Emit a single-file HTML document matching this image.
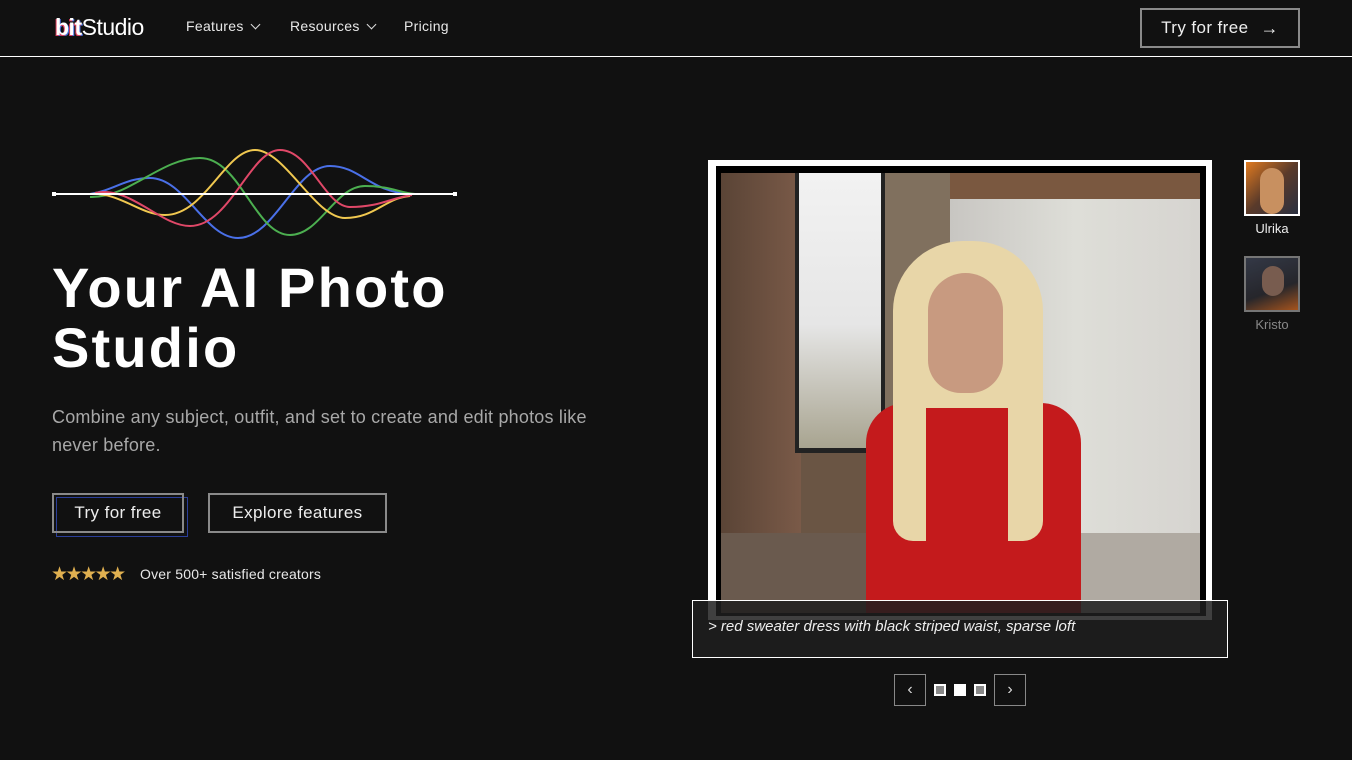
<!DOCTYPE html>
<html><head><meta charset="utf-8"><style>
*{margin:0;padding:0;box-sizing:border-box}
body{width:1352px;height:760px;background:#111111;font-family:"Liberation Sans",sans-serif;color:#fff;position:relative;overflow:hidden}
.a{position:absolute}
.nav{position:absolute;top:0;left:0;width:1352px;height:57px;border-bottom:1.5px solid #fff}
.logo{left:55px;top:14px;font-size:23px;letter-spacing:-0.5px}
.nl{top:18px;font-size:14px;color:#e8e8e8;letter-spacing:0.3px}
.chev{display:inline-block;width:7px;height:7px;border-right:1.5px solid #ddd;border-bottom:1.5px solid #ddd;transform:rotate(45deg);margin-left:8px;position:relative;top:-3px}
.btn{border:2px solid #8a8a8a;font-size:17px;color:#eee;display:flex;align-items:center;justify-content:center;letter-spacing:0.4px}
h1{position:absolute;left:52px;top:258px;font-size:56px;line-height:60px;font-weight:bold;letter-spacing:2.2px}
.sub{left:52px;top:403px;width:580px;font-size:18px;line-height:28px;color:#a8a8a8;letter-spacing:0.2px}
</style></head><body>
<div class="nav">
<div class="a logo"><b style="color:#fff;text-shadow:-1px 1px 0 #e04060,1px 1px 0 #4a70e0">bit</b>Studio</div>
<div class="a nl" style="left:186px">Features<span class="chev"></span></div>
<div class="a nl" style="left:290px">Resources<span class="chev"></span></div>
<div class="a nl" style="left:404px">Pricing</div>
<div class="a btn" style="left:1140px;top:8px;width:160px;height:40px">Try for free <span style="margin-left:12px;font-size:18px">→</span></div>
</div>

<svg class="a" style="left:0;top:140px" width="470" height="110" viewBox="0 140 470 110" fill="none" stroke-width="2">
<path d="M90 194 C115 190,125 178,150 178 C185 178,205 238,238 238 C275 238,295 166,330 166 C360 166,370 192,410 194" stroke="#4a70e8"/>
<path d="M90 197 C130 198,160 158,200 158 C240 158,255 235,290 235 C320 235,335 186,365 186 C390 186,400 193,415 194" stroke="#4caf50"/>
<path d="M90 194 C120 192,140 215,165 215 C205 215,225 150,255 150 C285 150,315 218,345 218 C375 218,385 198,410 196" stroke="#f0c850"/>
<path d="M95 193 C130 185,160 226,190 226 C230 226,250 150,280 150 C310 150,325 207,350 207 C380 207,390 198,412 195" stroke="#e04868"/>
<path d="M54 194 H455" stroke="#fff" stroke-width="2"/>
<rect x="52" y="192" width="4" height="4" fill="#fff"/><rect x="453" y="192" width="4" height="4" fill="#fff"/>
</svg>

<h1>Your AI Photo<br>Studio</h1>
<div class="a sub">Combine any subject, outfit, and set to create and edit photos like never before.</div>
<div class="a" style="left:56px;top:497px;width:132px;height:40px;border:1px solid #2b3f9a"></div>
<div class="a btn" style="left:52px;top:493px;width:132px;height:40px">Try for free</div>
<div class="a btn" style="left:208px;top:493px;width:179px;height:40px">Explore features</div>
<div class="a" style="left:51px;top:563px;font-size:19px;color:#e0b050;letter-spacing:-2.5px">★★★★★</div>
<div class="a" style="left:140px;top:566px;font-size:14px;color:#e8e8e8;letter-spacing:0.2px">Over 500+ satisfied creators</div>

<div class="a" style="left:708px;top:160px;width:504px;height:460px;background:#fff"></div>
<div class="a" style="left:716px;top:166px;width:490px;height:450px;background:#000"></div>
<div class="a" style="left:721px;top:173px;width:479px;height:440px;overflow:hidden;background:#6a5544">
 <div class="a" style="left:0;top:0;width:80px;height:440px;background:linear-gradient(90deg,#5a4436,#7a5a48)"></div>
 <div class="a" style="left:160px;top:0;width:70px;height:440px;background:#80705e"></div>
 <div class="a" style="left:74px;top:0;width:90px;height:280px;background:#222"></div>
 <div class="a" style="left:78px;top:0;width:82px;height:275px;background:linear-gradient(#f2f2f2,#e6e6e6 55%,#a8a490)"></div>
 <div class="a" style="left:229px;top:0;width:250px;height:440px;background:linear-gradient(90deg,#c8c6c2,#deded8 50%,#d6d4d0)"></div>
 <div class="a" style="left:229px;top:0;width:250px;height:26px;background:#7a5840"></div>
 <div class="a" style="left:320px;top:360px;width:159px;height:80px;background:#b0aaa2"></div>
 <div class="a" style="left:0;top:360px;width:160px;height:80px;background:#6a5a4e"></div>
 <div class="a" style="left:145px;top:230px;width:215px;height:240px;background:#c41a1c;border-radius:40px 40px 0 0"></div>
 <div class="a" style="left:172px;top:68px;width:150px;height:300px;background:#e8d6a8;border-radius:70px 70px 20px 20px"></div>
 <div class="a" style="left:207px;top:100px;width:75px;height:120px;background:#c89a80;border-radius:40px 40px 35px 35px"></div>
 <div class="a" style="left:205px;top:235px;width:82px;height:180px;background:#c41a1c"></div>
</div>
<div class="a" style="left:692px;top:600px;width:536px;height:58px;border:1.5px solid #fff;background:rgba(30,30,30,0.85)"></div>
<div class="a" style="left:708px;top:618px;font-size:15px;font-style:italic;color:#eee">&gt; red sweater dress with black striped waist, sparse loft</div>

<div class="a" style="left:894px;top:674px;width:32px;height:32px;border:1px solid #888;color:#ddd;font-size:16px;text-align:center;line-height:30px">‹</div>
<div class="a" style="left:934px;top:684px;width:12px;height:12px;border:2px solid #fff;background:#888"></div>
<div class="a" style="left:954px;top:684px;width:12px;height:12px;background:#fff"></div>
<div class="a" style="left:974px;top:684px;width:12px;height:12px;border:2px solid #fff;background:#888"></div>
<div class="a" style="left:994px;top:674px;width:32px;height:32px;border:1px solid #888;color:#ddd;font-size:16px;text-align:center;line-height:30px">›</div>

<div class="a" style="left:1244px;top:160px;width:56px;height:56px;border:2px solid #fff;background:linear-gradient(135deg,#e07a20,#5a3a2a 50%,#2a3040)"><div class="a" style="left:14px;top:6px;width:24px;height:46px;background:#c89060;border-radius:12px"></div></div>
<div class="a" style="left:1244px;top:221px;width:56px;text-align:center;font-size:13px;color:#eee">Ulrika</div>
<div class="a" style="left:1244px;top:256px;width:56px;height:56px;border:2px solid #888;background:linear-gradient(160deg,#3a4050,#2a2a30 60%,#c06020);opacity:0.85"><div class="a" style="left:16px;top:8px;width:22px;height:30px;background:#8a6a5a;border-radius:11px"></div></div>
<div class="a" style="left:1244px;top:317px;width:56px;text-align:center;font-size:13px;color:#888">Kristo</div>
</body></html>
